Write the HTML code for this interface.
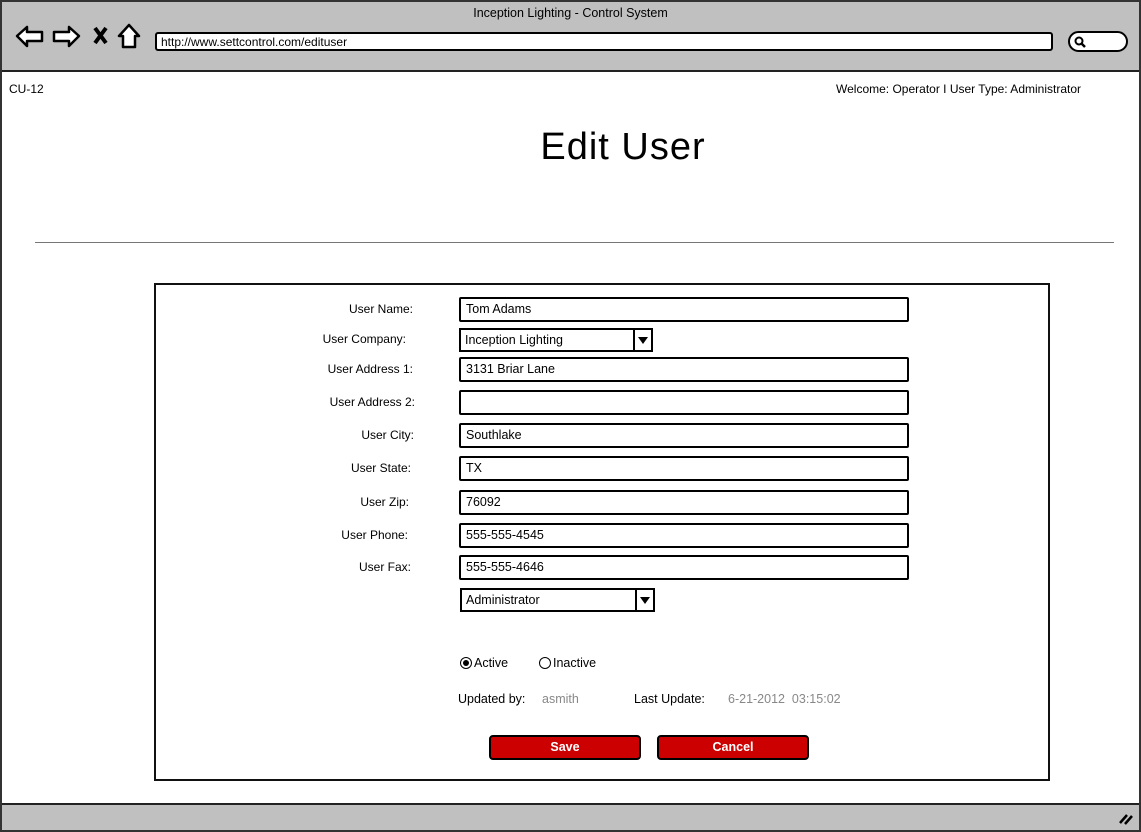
<!DOCTYPE html>
<html><head><style>
*{margin:0;padding:0;box-sizing:border-box}
body{width:1141px;height:832px;position:relative;background:#fff;font-family:"Liberation Sans",sans-serif;font-size:12px;color:#000;overflow:hidden}
.a{position:absolute}
.inp{position:absolute;left:459px;width:450px;height:25px;border:2px solid #000;border-radius:2px;padding:3px 0 0 5px;font-size:12.5px;background:#fff}
.lbl{position:absolute;right:728px;font-size:12px;text-align:right}
.dd{position:absolute;height:24px;border:2px solid #000;padding:3px 0 0 4px;font-size:12.5px;background:#fff}
.dd i{position:absolute;right:0;top:0;width:18px;height:20px;border-left:2px solid #000}
.dd i:after{content:"";position:absolute;left:3px;top:7px;border-left:5px solid transparent;border-right:5px solid transparent;border-top:7px solid #000}
.btn{position:absolute;top:735px;width:152px;height:25px;background:#c00;border:2px solid #000;border-radius:4px;color:#fff;font-weight:bold;text-align:center;font-size:12.5px;padding-top:3px}
</style></head><body>
<div class="a" style="left:0;top:0;width:1141px;height:832px;border:2px solid #333"></div>
<div class="a" style="left:2px;top:2px;width:1137px;height:70px;background:#c0c0c0;border-bottom:2px solid #222"></div>
<div class="a" style="left:0;top:6px;width:1141px;text-align:center;font-size:12.5px">Inception Lighting - Control System</div>
<svg class="a" style="left:14px;top:22px" width="130" height="30">
<path d="M3 14 L13 5 L13 10 L28 10 L28 19 L13 19 L13 24 Z" fill="#fff" stroke="#000" stroke-width="2.5" stroke-linejoin="round"/>
<path d="M65 14 L55 5 L55 10 L40 10 L40 19 L55 19 L55 24 Z" fill="#fff" stroke="#000" stroke-width="2.5" stroke-linejoin="round"/>
<path d="M81 6 L92 21 M92 6 L81 21" stroke="#000" stroke-width="4"/>
<path d="M115 3 L105 14 L109 14 L109 25 L121 25 L121 14 L125 14 Z" fill="#fff" stroke="#000" stroke-width="2.5" stroke-linejoin="round"/>
</svg>
<div class="a" style="left:155px;top:32px;width:898px;height:19px;background:#fff;border:2px solid #000;border-radius:3px;padding:1px 0 0 4px;font-size:12px">http://www.settcontrol.com/edituser</div>
<div class="a" style="left:1068px;top:31px;width:60px;height:21px;background:#fff;border:2px solid #000;border-radius:11px"></div>
<svg class="a" style="left:1073px;top:35px" width="14" height="14"><circle cx="6" cy="6" r="3.5" fill="none" stroke="#000" stroke-width="2"/><path d="M8.5 8.5 L12 12" stroke="#000" stroke-width="2.5"/></svg>
<div class="a" style="left:9px;top:82px;font-size:12px">CU-12</div>
<div class="a" style="right:60px;top:82px;font-size:12px">Welcome: Operator I User Type: Administrator</div>
<div class="a" style="left:0;top:126px;width:1246px;text-align:center;font-size:38px;letter-spacing:1px">Edit User</div>
<div class="a" style="left:35px;top:242px;width:1079px;height:1px;background:#777"></div>
<div class="a" style="left:154px;top:283px;width:896px;height:498px;border:2px solid #111"></div>
<div class="lbl" style="top:302px">User Name:</div><div class="inp" style="top:297px">Tom Adams</div>
<div class="lbl" style="top:332px;right:735px">User Company:</div><div class="dd" style="left:459px;top:328px;width:194px">Inception Lighting<i></i></div>
<div class="lbl" style="top:362px">User Address 1:</div><div class="inp" style="top:357px">3131 Briar Lane</div>
<div class="lbl" style="top:395px;right:726px">User Address 2:</div><div class="inp" style="top:390px"></div>
<div class="lbl" style="top:428px;right:727px">User City:</div><div class="inp" style="top:423px">Southlake</div>
<div class="lbl" style="top:461px;right:730px">User State:</div><div class="inp" style="top:456px">TX</div>
<div class="lbl" style="top:495px;right:732px">User Zip:</div><div class="inp" style="top:490px">76092</div>
<div class="lbl" style="top:528px;right:733px">User Phone:</div><div class="inp" style="top:523px">555-555-4545</div>
<div class="lbl" style="top:560px;right:730px">User Fax:</div><div class="inp" style="top:555px">555-555-4646</div>
<div class="dd" style="left:460px;top:588px;width:195px">Administrator<i></i></div>
<div class="a" style="left:460px;top:657px;width:12px;height:12px;border:1.5px solid #000;border-radius:50%"></div>
<div class="a" style="left:463px;top:660px;width:6px;height:6px;background:#000;border-radius:50%"></div>
<div class="a" style="left:474px;top:656px;font-size:12.5px">Active</div>
<div class="a" style="left:539px;top:657px;width:12px;height:12px;border:1.5px solid #000;border-radius:50%"></div>
<div class="a" style="left:553px;top:656px;font-size:12.5px">Inactive</div>
<div class="a" style="left:458px;top:692px;font-size:12.5px">Updated by:</div>
<div class="a" style="left:542px;top:692px;font-size:12.5px;color:#888">asmith</div>
<div class="a" style="left:634px;top:692px;font-size:12.5px">Last Update:</div>
<div class="a" style="left:728px;top:692px;font-size:12.5px;color:#888">6-21-2012&nbsp; 03:15:02</div>
<div class="btn" style="left:489px">Save</div>
<div class="btn" style="left:657px">Cancel</div>
<div class="a" style="left:2px;top:803px;width:1137px;height:27px;background:#c0c0c0;border-top:2px solid #222"></div>
<svg class="a" style="left:1117px;top:810px" width="18" height="16"><path d="M3 13 L10 5 M8 14 L15 6" stroke="#000" stroke-width="2.5"/></svg>
</body></html>
